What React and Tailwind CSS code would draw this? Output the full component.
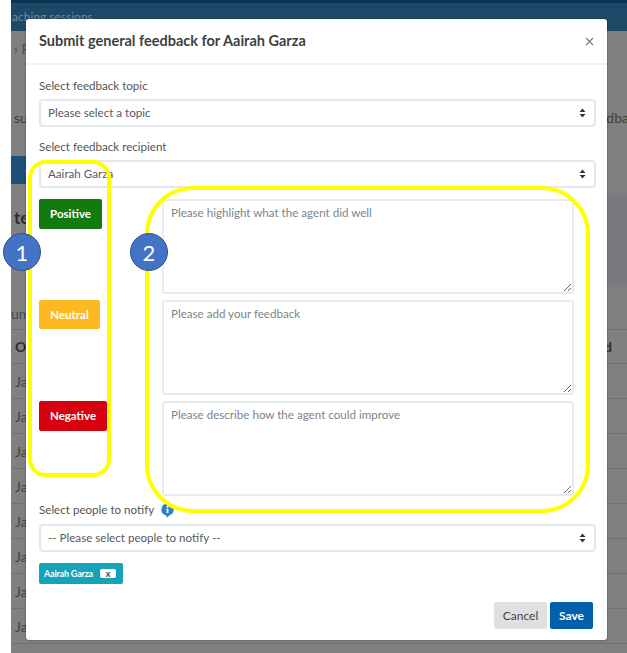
import { X } from "lucide-react";

const ROWS = ["Jai", "Jai", "Jai", "Jai", "Jai", "Jai", "Jai", "Jai"];

const FEEDBACK = [
  { label: "Positive", color: "bg-[#137a10] w-[63px] h-[30px]", text: "Please highlight what the agent did well" },
  { label: "Neutral", color: "bg-[#fdb922] w-[61px] h-[29px]", text: "Please add your feedback" },
  { label: "Negative", color: "bg-[#d7000f] w-[68px] h-[30px]", text: "Please describe how the agent could improve" },
];

function SelectBox({ value }) {
  return (
    <div className="relative">
      <select className="block w-full h-[28px] appearance-none rounded-[4px] border-2 border-[#e4e8ee] bg-white pl-[7px] text-[11.6px] text-[#555b63] outline-none">
        <option>{value}</option>
      </select>
      <svg className="pointer-events-none absolute right-[10px] top-[9px]" width="7" height="10" viewBox="0 0 7 10">
        <path d="M3.5 0.5L6.5 4H0.5zM3.5 9.5L0.5 6H6.5z" fill="#333" />
      </svg>
    </div>
  );
}

function Background() {
  return (
    <div className="ml-[11px] flex h-[653px] flex-col overflow-hidden bg-[#808080] text-[14px] text-[#3d3d3d]">
      <div className="h-[3px] bg-[#0b3355]" />
      <div className="h-[28px] bg-[#1f4867] pl-[1px] pt-[6px] text-[12px] leading-[16px] text-[#6f8ba0]">aching sessions</div>
      <div className="h-[36px] pl-[3px] pt-[10px] leading-[16px] text-[#4c4c4c]">› F</div>
      <div className="flex h-[59px] items-end justify-between whitespace-nowrap leading-[16px]">
        <span className="pl-[3px]">su</span>
        <span className="-mr-[2px]">edba</span>
      </div>
      <div className="mt-[30px] flex h-[28px] w-[40px] shrink-0 items-center justify-center bg-[#1c5079] text-[12px] text-[#7d9ab0]">ck</div>
      <div className="h-[11px] shrink-0" />
      <div className="flex h-[90px] shrink-0">
        <span className="pl-[3px] pt-[13px] text-[17px] leading-[20px] font-bold text-[#2c2c2c]">te</span>
        <div className="ml-auto h-full w-[20px] bg-[#787a7e]" />
      </div>
      <div className="flex h-[44px] shrink-0 items-center pt-[12px] text-[#3d4c60]">umi</div>
      <div className="flex h-[35px] shrink-0 items-center justify-between border-y border-[#6f6f6f] pl-[4px] pr-[15px] font-bold text-[#2c2c2c]">
        <span>Or</span>
        <span>d</span>
      </div>
      {ROWS.map((row, i) => (
        <div key={i} className="flex h-[35px] shrink-0 items-center border-b border-[#707070] px-[4px] text-[#444]">
          {row}
        </div>
      ))}
    </div>
  );
}

function Modal() {
  return (
    <div className="absolute left-[26px] top-[19px] flex h-[621px] w-[581px] flex-col rounded-[3px] bg-white shadow-[0_0_2px_rgba(0,0,0,0.5)]">
      <div className="flex h-[46px] shrink-0 items-center justify-between border-b-2 border-[#f0f1f2] pl-[13px] pr-[11px]">
        <h2 className="text-[14.5px] font-bold text-[#3f3f3f]">Submit general feedback for Aairah Garza</h2>
        <X size={13} strokeWidth={2} className="text-[#777]" />
      </div>
      <div className="flex flex-1 flex-col pl-[13px] pr-[11px]">
        <label className="mt-[13px] mb-[5px] text-[11.6px] leading-[16px] text-[#555]">Select feedback topic</label>
        <SelectBox value="Please select a topic" />
        <label className="mt-[12px] mb-[5px] text-[11.6px] leading-[16px] text-[#555]">Select feedback recipient</label>
        <SelectBox value="Aairah Garza" />
        <div className="mt-[11px] flex flex-col gap-[6px]">
          {FEEDBACK.map((item) => (
            <div key={item.label} className="flex">
              <div className="w-[123px] shrink-0">
                <button className={`${item.color} flex items-center justify-center rounded-[2px] text-[11.5px] font-bold text-white`}>
                  {item.label}
                </button>
              </div>
              <textarea
                placeholder={item.text}
                className="h-[95px] w-[412px] rounded-[3px] border-2 border-[#e8ebef] px-[7px] py-[4px] text-[11.6px] leading-[16px] text-[#555] outline-none placeholder:text-[#7c848c]"
              />
            </div>
          ))}
        </div>
        <div className="mt-[6px] mb-[6px] flex items-center gap-[7px]">
          <label className="text-[11.6px] leading-[16px] text-[#555]">Select people to notify</label>
          <svg width="13" height="15" viewBox="0 0 13 15">
            <path d="M6.5 0.5a6 6 0 0 1 2.2 11.6L6.5 14.5l-2.2-2.4A6 6 0 0 1 6.5 0.5z" fill="#2b7fc3" />
            <rect x="5.6" y="5.5" width="1.8" height="4.5" fill="#fff" />
            <rect x="5.6" y="3" width="1.8" height="1.6" fill="#fff" />
          </svg>
        </div>
        <SelectBox value="-- Please select people to notify --" />
        <div className="mt-[11px] flex h-[21px] w-[84px] items-center rounded-[2px] bg-[#14a3b8] pl-[5px] text-[9px] font-bold tracking-[-0.2px] text-white">
          Aairah Garza
          <span className="ml-[7px] flex h-[9px] w-[16px] items-center justify-center rounded-[2px] bg-white text-[9px] font-bold leading-none text-[#444]">x</span>
        </div>
        <div className="mt-[18px] flex justify-end gap-[3px] pr-[3px]">
          <button className="h-[27px] w-[53px] rounded-[2px] bg-[#e0e0e0] text-[12px] text-[#444]">Cancel</button>
          <button className="h-[27px] w-[43px] rounded-[2px] bg-[#0060a9] text-[12px] font-bold text-white">Save</button>
        </div>
      </div>
    </div>
  );
}

export default function App() {
  return (
    <div className="relative h-[653px] w-[627px] overflow-hidden bg-white font-['Lato',sans-serif]">
      <Background />
      <Modal />
      {/* callouts drawn on top of the screenshot */}
      <div className="absolute left-[28px] top-[160px] h-[317px] w-[83px] rounded-[18px] border-[4px] border-[#ffff00]" />
      <div className="absolute left-[145px] top-[186px] h-[327px] w-[445px] rounded-[48px] border-[4px] border-[#ffff00]" />
      <div className="absolute left-[3px] top-[233px] flex h-[38px] w-[38px] items-center justify-center rounded-full border border-[#2f528f] bg-[#4472c4] text-[22px] text-white">1</div>
      <div className="absolute left-[130px] top-[233px] flex h-[38px] w-[38px] items-center justify-center rounded-full border border-[#2f528f] bg-[#4472c4] text-[22px] text-white">2</div>
    </div>
  );
}
